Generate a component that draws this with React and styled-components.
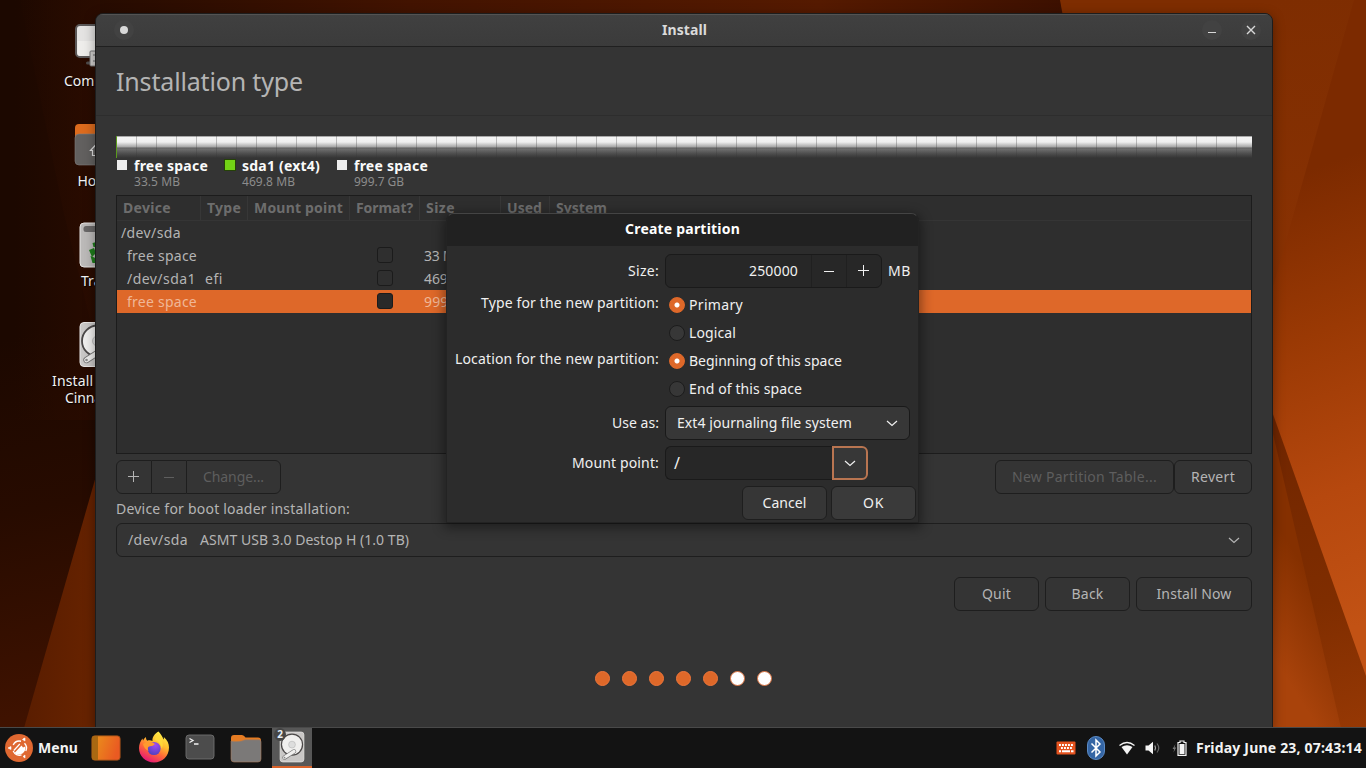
import React, { useLayoutEffect, useRef, useState } from "react";
import styled, { createGlobalStyle, css } from "styled-components";

const Global = createGlobalStyle`
  * { box-sizing: border-box; }
  html, body { margin: 0; padding: 0; overflow: hidden; }
  body { font-family: "Noto Sans", "Open Sans", sans-serif; font-size: 14px; line-height: 20px; color: #f2f2f2; background: #1c0800; }
`;

/* ---------- text ---------- */

const TextSpan = styled.span`
  display: inline-block;
  flex: none;
  white-space: pre;
  font-size: ${(p) => p.$size || 14}px;
  font-weight: ${(p) => (p.$bold ? 700 : 400)};
  line-height: ${(p) => p.$line || 20}px;
  color: ${(p) => p.$color || "inherit"};
`;

/* A label tracked so that it takes a given advance width. */
function Text({ w, size, bold, color, line, children }) {
  const ref = useRef(null);
  const [spacing, setSpacing] = useState(0);
  useLayoutEffect(() => {
    const natural = ref.current.getBoundingClientRect().width;
    setSpacing((w - 1 - natural) / children.length);
  }, []);
  return (
    <TextSpan ref={ref} $size={size} $bold={bold} $color={color} $line={line} style={{ letterSpacing: spacing }}>
      {children}
    </TextSpan>
  );
}

/* ---------- desktop ---------- */

const Desktop = styled.div`
  position: relative;
  width: 1366px;
  height: 768px;
  overflow: hidden;
`;

const WallpaperSvg = styled.svg`
  position: absolute;
  inset: 0;
`;

function Wallpaper() {
  return (
    <WallpaperSvg width="1366" height="768" viewBox="0 0 1366 768">
      <defs>
        <linearGradient id="wBase" x1="0" y1="0" x2="1" y2="0">
          <stop offset="0" stopColor="#1a0800" />
          <stop offset="0.07" stopColor="#260b00" />
          <stop offset="0.3" stopColor="#421300" />
          <stop offset="0.6" stopColor="#551a00" />
          <stop offset="0.78" stopColor="#3c1000" />
        </linearGradient>
        <linearGradient id="wLeft" gradientUnits="userSpaceOnUse" x1="0" y1="340" x2="90" y2="760">
          <stop offset="0" stopColor="#1c0800" />
          <stop offset="0.4" stopColor="#270b00" />
          <stop offset="1" stopColor="#461400" />
        </linearGradient>
        <linearGradient id="wShade" gradientUnits="userSpaceOnUse" x1="15" y1="0" x2="100" y2="0">
          <stop offset="0" stopColor="#2c0c00" stopOpacity="0" />
          <stop offset="1" stopColor="#2c0c00" stopOpacity="1" />
        </linearGradient>
        <linearGradient id="wWedge" x1="0" y1="0" x2="1" y2="0.3">
          <stop offset="0" stopColor="#551b00" />
          <stop offset="1" stopColor="#672300" />
        </linearGradient>
        <linearGradient id="wTop" gradientUnits="userSpaceOnUse" x1="1273" y1="0" x2="1300" y2="300">
          <stop offset="0" stopColor="#7e2d01" />
          <stop offset="1" stopColor="#8a3203" />
        </linearGradient>
        <linearGradient id="wMid" gradientUnits="userSpaceOnUse" x1="1280" y1="180" x2="1430" y2="600">
          <stop offset="0" stopColor="#7c2a00" />
          <stop offset="0.35" stopColor="#9a3904" />
          <stop offset="0.7" stopColor="#b6480e" />
          <stop offset="1" stopColor="#c25214" />
        </linearGradient>
        <linearGradient id="wBand" gradientUnits="userSpaceOnUse" x1="1273" y1="410" x2="1366" y2="727">
          <stop offset="0" stopColor="#6f2500" />
          <stop offset="0.6" stopColor="#7f2d00" />
          <stop offset="1" stopColor="#963804" />
        </linearGradient>
        <linearGradient id="wLow" gradientUnits="userSpaceOnUse" x1="1325" y1="600" x2="1262" y2="640">
          <stop offset="0" stopColor="#853000" />
          <stop offset="1" stopColor="#a9430b" />
        </linearGradient>
      </defs>
      <rect width="1366" height="768" fill="url(#wBase)" />
      <rect width="100" height="768" fill="url(#wLeft)" />
      <rect width="100" height="420" fill="url(#wShade)" opacity="0.7" />
      <path d="M20 0 H100 V360 L64 214Z" fill="url(#wShade)" opacity="0.6" />
      <path d="M100 462 L24 728 H100Z" fill="url(#wWedge)" />
      <path d="M1060 0 H1366 V768 H1200Z" fill="url(#wTop)" />
      <path d="M1354 0 H1366 V768 H1273 V287Z" fill="url(#wMid)" />
      <path d="M1268 400 L1366 676 V728 H1268Z" fill="url(#wBand)" />
      <path d="M1268 412 L1341 728 H1268Z" fill="url(#wLow)" />
    </WallpaperSvg>
  );
}

const Shortcuts = styled.div`
  position: absolute;
  left: 47px;
  top: 17px;
  width: 100px;
  display: flex;
  flex-direction: column;
`;

const Shortcut = styled.div`
  height: 100px;
  display: flex;
  flex-direction: column;
  align-items: center;
  text-shadow: 1px 1px 1px #000;
  svg { flex: none; margin-bottom: 1px; }
`;

const LabelLine = styled.div`
  align-self: flex-start;
  height: ${(p) => p.$h || 20}px;
  padding-left: ${(p) => p.$indent}px;
`;

function DriveShape() {
  return (
    <>
      <rect x="6.5" y="2.5" width="35" height="44" rx="4" fill="#c9c7c6" stroke="#e9e7e6" />
      <circle cx="24" cy="21" r="15.5" fill="#f0efee" stroke="#4b4848" strokeWidth="1.8" />
      <circle cx="24" cy="21" r="5" fill="#ddd" stroke="#bbb" />
      <path d="M13 40 L27 31" stroke="#777" strokeWidth="6.4" strokeLinecap="round" />
      <path d="M13 40 L27 31" stroke="#efeeed" strokeWidth="4.6" strokeLinecap="round" />
      <circle cx="13" cy="40" r="1.3" fill="#888" />
    </>
  );
}

const desktopIcons = {
  computer: (
    <>
      <rect x="3" y="8" width="42" height="32" rx="4" fill="#e4e3e2" stroke="#5b5858" strokeWidth="2" />
      <path d="M4.500 24 H44 V36 Q44 39 41 39 H7.500 Q4.500 39 4.500 36Z" fill="#f0efee" opacity="0.8" />
      <rect x="13" y="44.500" width="22" height="3" rx="1.500" fill="#4f4c4c" />
      <rect x="17" y="34" width="18" height="15" rx="1" fill="#cfcdcc" stroke="#777" />
      <path d="M20 38 H34 M20 44 H34" stroke="#888" strokeWidth="1.500" />
    </>
  ),
  home: (
    <>
      <path d="M2 11 Q2 7 6 7 H42 Q46 7 46 11 V26 H2Z" fill="#dd6b1d" />
      <path d="M2 21 Q2 17 6 17 H42 Q46 17 46 21 V44 Q46 48 42 48 H6 Q2 48 2 44Z" fill="#62605f" stroke="#817e7d" strokeWidth="0.6" />
      <path d="M24 26.500 L17.500 33.500 H19.500 V38.500 H28.500 V33.500 H30.500Z" fill="none" stroke="#ddd" strokeWidth="1.200" />
    </>
  ),
  trash: (
    <>
      <rect x="7" y="6" width="34" height="44" rx="4" fill="#bcbab9" stroke="#e4e2e1" />
      <rect x="10.500" y="9" width="27" height="6" rx="2.500" fill="#6a6868" />
      <path d="M19.500 26 l4 -1 l3 5 h-6z M16 33 l5 -2 l2 5 l-4 4 z M17.500 39 l5 2 v5 h-3z" fill="#1f7d1c" />
    </>
  ),
};

/* ---------- window ---------- */

const Window = styled.section`
  position: absolute;
  left: 95px;
  top: 13px;
  width: 1178px;
  height: 715px;
  border: 1px solid #1d1d1d;
  border-radius: 8px 8px 0 0;
  background: #343434;
  color: #b4b4b4;
  box-shadow: 0 3px 12px rgba(0, 0, 0, 0.38);
  overflow: hidden;
`;

const TitleBar = styled.header`
  height: 33px;
  display: flex;
  align-items: center;
  padding: 0 11px 1px 18px;
  background: linear-gradient(#404040, #3b3b3b);
  border-top: 1px solid #535353;
  border-bottom: 1px solid #202020;
  color: #dadada;
`;

const TitleSide = styled.div`
  width: 200px;
  display: flex;
  justify-content: ${(p) => p.$end ? "flex-end" : "flex-start"};
  gap: 19px;
`;

const TitleText = styled.div`
  flex: 1;
  display: flex;
  justify-content: center;
  padding: 0 6px 1px 0;
`;

const RoundControl = styled.div`
  width: 20px;
  height: 20px;
  border-radius: 50%;
  background: #424242;
  svg { display: block; }
`;

const Heading = styled.div`
  height: 69px;
  padding: 17px 0 0 20px;
  border-bottom: 1px solid #2d2d2d;
`;

const Body = styled.div`
  padding: 20px 20px 0;
  display: flex;
  flex-direction: column;
`;

const PartitionBar = styled.div`
  height: 22px;
  border-left: 1px solid #5a9a1c;
  background:
    linear-gradient(transparent 0 12px, rgba(52, 52, 52, 0.1) 13px, #343434 22px),
    repeating-linear-gradient(90deg, transparent 0 19px, rgba(70, 70, 70, 0.32) 19px 20px),
    linear-gradient(#a8a8a8 0 1px, #f4f4f4 1px, #f0f0f0 6px, #a5a5a5 11px, #5d5d5d 12px, #777 13px, #686868 22px);
`;

const Legend = styled.div`
  height: 37px;
  display: flex;
`;

const LegendItem = styled.div`
  display: flex;
  gap: 6px;
  width: ${(p) => p.$w}px;
`;

const Swatch = styled.i`
  width: 12px;
  height: 12px;
  margin-top: 1px;
  border: 1px solid ${(p) => p.$edge};
  background: ${(p) => p.$fill};
`;

const LegendText = styled.div`
  display: flex;
  flex-direction: column;
  align-items: flex-start;
`;

const Table = styled.div`
  height: 259px;
  border: 1px solid #1c1c1c;
  background: #2e2e2e;
`;

const cols = "84px 47px 102px 70px 81px 49px 1fr";

const HeadRow = styled.div`
  display: grid;
  grid-template-columns: ${cols};
  height: 25px;
  border-bottom: 1px solid #353535;
`;

const HeadCell = styled.div`
  padding: 2px 0 0 6px;
  overflow: hidden;
  border-right: 1px solid #373737;
  &:last-child { border-right: none; }
`;

const Row = styled.div`
  display: grid;
  grid-template-columns: ${cols};
  height: 23px;
  ${(p) => p.$on && css`
    background: #de6829;
    color: #f0b796;
  `}
`;

const Cell = styled.div`
  display: flex;
  padding-top: 2px;
  padding-left: ${(p) => p.$pad || 4}px;
`;

const Check = styled.i`
  width: 16px;
  height: 16px;
  margin: 1px 0 0 23px;
  border: 1px solid #1b1b1b;
  border-radius: 3px;
  background: ${(p) => (p.$on ? "#292929" : "#2f2f2f")};
`;

const Actions = styled.div`
  display: flex;
  justify-content: space-between;
  margin-top: 6px;
`;

const Group = styled.div`
  display: flex;
`;

const Button = styled.button`
  display: flex;
  align-items: center;
  justify-content: center;
  height: 34px;
  width: ${(p) => p.$w}px;
  padding: 0 0 ${(p) => (p.$glyph ? 0 : 1)}px;
  margin: 0;
  font: inherit;
  border: 1px solid #1e1e1e;
  border-radius: 6px;
  background: ${(p) => p.$bg || "#343434"};
  color: ${(p) => (p.$off ? "#5e5e5e" : "inherit")};
  ${(p) => p.$join === "left" && css`border-radius: 6px 0 0 6px;`}
  ${(p) => p.$join === "mid" && css`border-radius: 0; border-width: 1px 0;`}
  ${(p) => p.$join === "right" && css`border-radius: 0 6px 6px 0;`}
`;

const FieldLabel = styled.div`
  height: 29px;
  padding-top: 5px;
`;

const Select = styled.div`
  height: 34px;
  display: flex;
  align-items: center;
  gap: 12px;
  padding: 0 9px 1px 11px;
  border: 1px solid #1e1e1e;
  border-radius: 6px;
  background: #343434;
  svg { margin-left: auto; }
`;

const Footer = styled.div`
  display: flex;
  justify-content: flex-end;
  gap: 6px;
  margin-top: 20px;
`;

const Dots = styled.div`
  display: flex;
  justify-content: center;
  gap: 12px;
  margin-top: 60px;
  padding-right: 2px;
`;

const Dot = styled.i`
  width: 15px;
  height: 15px;
  border-radius: 50%;
  border: 1px solid ${(p) => (p.$on ? "#f0763a" : "#d9713f")};
  background: ${(p) => (p.$on ? "#de6829" : "#fff")};
`;

/* ---------- dialog ---------- */

const Dialog = styled.section`
  position: absolute;
  left: 446px;
  top: 213px;
  width: 473px;
  height: 310px;
  border: 1px solid #232323;
  border-top-color: #444;
  border-radius: 8px 8px 0 0;
  background: #2c2c2c;
  color: #f0f0f0;
  box-shadow: 0 3px 12px 2px rgba(0, 0, 0, 0.42);
`;

const DialogTitle = styled.header`
  height: 32px;
  display: flex;
  justify-content: center;
  align-items: center;
  padding-bottom: 2px;
  background: #212121;
  border-radius: 7px 7px 0 0;
  color: #fff;
`;

const Form = styled.div`
  display: grid;
  grid-template-columns: 212px auto;
  column-gap: 6px;
  padding-top: 8px;
`;

const FormLabel = styled.div`
  display: flex;
  justify-content: flex-end;
  padding-top: ${(p) => p.$top}px;
`;

const FormValue = styled.div`
  display: flex;
  align-items: center;
  gap: 6px;
  height: ${(p) => p.$h}px;
  padding-bottom: ${(p) => p.$pb || 0}px;
  padding-left: ${(p) => p.$pl || 0}px;
`;

const Spin = styled.div`
  width: 217px;
  height: 34px;
  display: flex;
  align-items: stretch;
  border: 1px solid #1a1a1a;
  border-radius: 6px;
  background: #272727;
`;

const SpinValue = styled.div`
  flex: 1;
  display: flex;
  justify-content: flex-end;
  align-items: center;
  padding: 0 13px 0 0;
`;

const SpinButton = styled.div`
  width: 35px;
  display: flex;
  align-items: center;
  justify-content: center;
  border-left: 1px solid #202020;
`;

const Radio = styled.i`
  width: 16px;
  height: 16px;
  border-radius: 50%;
  margin-right: -2px;
  border: 1px solid ${(p) => (p.$on ? "#de6829" : "#1c1c1c")};
  background: ${(p) => (p.$on ? "radial-gradient(circle, #fff 0 2px, #de6829 3px)" : "#373737")};
`;

const DialogSelect = styled(Select)`
  width: 245px;
  background: #373737;
  border-color: #191919;
`;

const Combo = styled.div`
  display: flex;
  height: 34px;
`;

const Entry = styled.div`
  width: 167px;
  padding: 6px 0 0 8px;
  border: 1px solid #1a1a1a;
  border-right: 0;
  border-radius: 6px 0 0 6px;
  background: #272727;
`;

const ComboArrow = styled.div`
  width: 36px;
  display: flex;
  align-items: center;
  justify-content: center;
  border: 2px solid #b97551;
  border-radius: 0 6px 6px 0;
  background: #373737;
`;

const DialogActions = styled.div`
  display: flex;
  justify-content: flex-end;
  gap: 4px;
  padding-right: 2px;
`;

/* ---------- panel ---------- */

const Panel = styled.footer`
  position: absolute;
  left: 0;
  top: 727px;
  width: 1366px;
  height: 41px;
  display: flex;
  align-items: stretch;
  border-top: 1px solid #494949;
  background: #131313;
  color: #f3f3f3;
`;

const MenuButton = styled.div`
  width: 86px;
  display: flex;
  align-items: center;
  gap: 5px;
  padding-left: 5px;
`;

const Launcher = styled.div`
  position: relative;
  width: 40px;
  margin-right: ${(p) => p.$gap || 6}px;
  display: flex;
  align-items: center;
  justify-content: center;
  padding-bottom: ${(p) => p.$lift || 0}px;
  ${(p) => p.$active && css`
    background: #575757;
    border-bottom: 2px solid #d8622a;
  `}
`;

const Badge = styled.div`
  position: absolute;
  left: 2px;
  top: 0;
  width: 12px;
  height: 13px;
  border-radius: 50%;
  background: #454545;
  text-align: center;
  font-size: 10px;
  font-weight: 700;
  line-height: 13px;
  color: #e6eef8;
`;

const Tray = styled.div`
  margin-left: auto;
  display: flex;
  align-items: center;
  padding-right: 4px;
  svg { flex: none; }
`;

const TrayItem = styled.div`
  display: flex;
  margin-right: ${(p) => p.$gap}px;
`;

/* ---------- glyphs ---------- */

const Glyph = ({ d, width = 1 }) => (
  <svg width="16" height="16" viewBox="0 0 16 16" fill="none" stroke="currentColor" strokeWidth={width}>
    <path d={d} />
  </svg>
);

const PLUS = "M7.500 2 V13 M2 7.500 H13";
const MINUS = "M3 8.500 H13";
const Chevron = () => <Glyph d="M3 6 L8 10.500 L13 6" width={1.2} />;

function MenuLogo() {
  return (
    <svg width="28" height="28" viewBox="0 0 28 28">
      <circle cx="14" cy="14" r="14" fill="#df6831" />
      <path d="M8.200 11 A7 7 0 0 1 16 7.200 M19.500 9.300 A7 7 0 0 1 20.800 17 M16.500 20.900 A7 7 0 0 1 8.200 17" fill="none" stroke="#fff" strokeWidth="1.400" />
      <path d="M9.500 19 L16.500 11.500 L18 13.500 L20.300 12.500 Q21 16.500 17.800 19.200 Q13.500 22 9.500 19Z" fill="#fff" />
      <path d="M8.800 16.500 L14.800 10" stroke="#fff" strokeWidth="1.200" />
      <path d="M3 14 l3 -1.500 v3z M18.500 4.500 l1.500 -0.500 v3 l-2.500 -1.500z M18 22.500 l2 -1.500 v3z" fill="#fff" stroke="#fff" strokeWidth="0.600" />
    </svg>
  );
}

function ShowDesktop() {
  return (
    <svg width="30" height="26" viewBox="0 0 30 26">
      <defs>
        <linearGradient id="sd" x1="0" x2="1" y2="0.3">
          <stop offset="0.2" stopColor="#ea8a1c" />
          <stop offset="1" stopColor="#ea5a22" />
        </linearGradient>
      </defs>
      <rect x="0.800" y="0.800" width="28.400" height="24.400" rx="3" fill="url(#sd)" stroke="#8a4a16" strokeWidth="0.800" />
      <path d="M3.800 1 H7 V25 H3.800 Q1 25 1 22 V4 Q1 1 3.800 1Z" fill="#a96812" />
    </svg>
  );
}

function Firefox() {
  return (
    <svg width="32" height="32" viewBox="0 0 32 32">
      <defs>
        <linearGradient id="ffA" x1="0.800" y1="0.050" x2="0.300" y2="1">
          <stop offset="0" stopColor="#fff24a" />
          <stop offset="0.350" stopColor="#ffbd2e" />
          <stop offset="0.620" stopColor="#ff6a36" />
          <stop offset="1" stopColor="#e3127b" />
        </linearGradient>
        <radialGradient id="ffB" cx="0.600" cy="0.250" r="0.850">
          <stop offset="0" stopColor="#a04bf2" />
          <stop offset="1" stopColor="#4540b8" />
        </radialGradient>
      </defs>
      <path d="M20.500 0.500 C22.500 3 24.500 5 25.500 8.500 C26 7.800 26 6.800 25.800 6 C29.500 9 31 13 31 16.500 C31 25 24.500 31.500 16 31.500 C7.500 31.500 1 25 1 17 C1 13 2.500 10 4.500 7.500 L5 9.800 C5.800 8 6.800 6.800 8 6 C7.800 7.500 8.300 8.800 9.300 9.700 C11 9 13 9.200 14.500 10 C14 6 17 2.500 20.500 0.500Z" fill="url(#ffA)" />
      <circle cx="16" cy="17.500" r="6.600" fill="url(#ffB)" />
      <path d="M5 13 Q9 9.500 14.500 11.500 L17 13 Q15 15.300 12 15.200 Q8.500 15.800 10.500 20 Q6 18 5 13Z" fill="#ff9a2e" />
      <path d="M17 9 Q23 11 23.500 18 Q26 14 23.500 8 L20.500 3 Q17 5 17 9Z" fill="#ffdc3b" opacity="0.800" />
    </svg>
  );
}

function Terminal() {
  return (
    <svg width="30" height="26" viewBox="0 0 30 26">
      <rect x="1" y="1" width="28" height="24" rx="3" fill="#4c4c4c" stroke="#6f6f6f" strokeWidth="0.900" />
      <path d="M4.500 4.500 L8 6.500 L4.500 8.500 M9 10 H13.500" fill="none" stroke="#f2f2f2" strokeWidth="1.300" />
    </svg>
  );
}

function Folder() {
  return (
    <svg width="32" height="29" viewBox="0 0 32 29">
      <path d="M1 4 Q1 1 4 1 H12 Q14 1 15.500 3.500 H28 Q31 3.500 31 6.500 V14 H1Z" fill="#e57c23" />
      <path d="M1 7 Q10 8.500 15 5.800 H29 Q31 5.800 31 8 V25 Q31 28 28 28 H4 Q1 28 1 25Z" fill="#7b7978" stroke="#a87a5a" strokeWidth="0.600" />
    </svg>
  );
}

function KeyboardIcon() {
  return (
    <svg width="20" height="14" viewBox="0 0 20 14">
      <rect x="0.500" y="0.500" width="19" height="13" rx="1" fill="#e4531f" />
      <path d="M3 4 H17.500 M5 7 H16" stroke="#fff" strokeWidth="1.900" strokeDasharray="1.900 1.100" />
      <path d="M3 10.300 H5 M6 10.300 H14 M15 10.300 H17.500" stroke="#fff" strokeWidth="1.900" />
    </svg>
  );
}

function BluetoothIcon() {
  return (
    <svg width="18" height="24" viewBox="0 0 18 24">
      <rect x="0.500" y="0.500" width="17" height="23" rx="8.500" fill="#3465a4" stroke="#5b8ac4" />
      <path d="M4.500 7.500 L13 16 L9 20 V4 L13 8 L4.500 16.500" fill="none" stroke="#fff" strokeWidth="1.500" />
    </svg>
  );
}

function WifiIcon() {
  return (
    <svg width="16" height="14" viewBox="0 0 16 14">
      <path d="M8 13.500 L2.500 6 Q8 2.500 13.500 6Z" fill="#f4f4f4" />
      <path d="M0.500 4.500 Q8 -1.500 15.500 4.500" fill="none" stroke="#f4f4f4" strokeWidth="1.300" />
    </svg>
  );
}

function VolumeIcon() {
  return (
    <svg width="16" height="14" viewBox="0 0 16 14">
      <path d="M0.500 4.500 H3.500 L8 0.800 V13.200 L3.500 9.500 H0.500Z" fill="#f4f4f4" />
      <path d="M9.800 4.500 Q11.300 7 9.800 9.500" fill="none" stroke="#aaa" strokeWidth="1.200" />
      <path d="M12 2.500 Q15.500 7 12 11.500" fill="none" stroke="#666" strokeWidth="1.200" />
    </svg>
  );
}

function BatteryIcon() {
  return (
    <svg width="16" height="16" viewBox="0 0 16 16">
      <path d="M4.500 4 L1.500 9 H3.200 L2.500 12.500 L5.200 7.500 H3.500Z" fill="#777" />
      <path d="M7 2.500 H9 V1 H13 V2.500 H15 V15.300 H7Z" fill="none" stroke="#f4f4f4" strokeWidth="1.200" />
      <rect x="8.500" y="4" width="5" height="10" fill="#f4f4f4" />
    </svg>
  );
}

/* ---------- data ---------- */

const legend = [
  { name: "free space", nw: 75, size: "33.5 MB", sw: 47, fill: "#eee", edge: "#343434", w: 108 },
  { name: "sda1 (ext4)", nw: 79, size: "469.8 MB", sw: 54, fill: "#73d216", edge: "#254207", w: 112 },
  { name: "free space", nw: 75, size: "999.7 GB", sw: 51, fill: "#eee", edge: "#343434", w: 112 },
];

const headers = [
  ["Device", 49], ["Type", 35], ["Mount point", 90], ["Format?", 58], ["Size", 30], ["Used", 36], ["System", 52],
];

const rows = [
  { device: "free space", dw: 71, size: "33 MB", sw: 41 },
  { device: "/dev/sda1", dw: 70, type: "efi", size: "469 MB", sw: 50 },
  { device: "free space", dw: 71, size: "999 GB", sw: 49, on: true },
];

/* ---------- views ---------- */

function InstallWindow() {
  return (
    <Window>
      <TitleBar>
        <TitleSide>
          <RoundControl>
            <svg width="20" height="20"><circle cx="10" cy="10" r="4" fill="#d8d8d8" /></svg>
          </RoundControl>
        </TitleSide>
        <TitleText><Text w={46} bold>Install</Text></TitleText>
        <TitleSide $end>
          <RoundControl>
            <svg width="20" height="20"><path d="M6 12.500 H14" stroke="#d8d8d8" /></svg>
          </RoundControl>
          <RoundControl>
            <svg width="20" height="20"><path d="M6 6 L14 14 M14 6 L6 14" stroke="#d8d8d8" strokeWidth="1.400" /></svg>
          </RoundControl>
        </TitleSide>
      </TitleBar>
      <Heading><Text w={188} size={25} line={34}>Installation type</Text></Heading>
      <Body>
        <PartitionBar />
        <Legend>
          {legend.map((l, i) => (
            <LegendItem key={i} $w={l.w}>
              <Swatch $fill={l.fill} $edge={l.edge} />
              <LegendText>
                <Text w={l.nw} bold color="#fafafa" line={16}>{l.name}</Text>
                <Text w={l.sw} size={12} color="#8c8c8c" line={16}>{l.size}</Text>
              </LegendText>
            </LegendItem>
          ))}
        </Legend>
        <Table>
          <HeadRow>
            {headers.map(([name, w]) => (
              <HeadCell key={name}><Text w={w} bold color="#6d6d6d">{name}</Text></HeadCell>
            ))}
          </HeadRow>
          <Row><Cell><Text w={61}>/dev/sda</Text></Cell></Row>
          {rows.map((r, i) => (
            <Row key={i} $on={r.on}>
              <Cell $pad={10}><Text w={r.dw}>{r.device}</Text></Cell>
              <Cell>{r.type && <Text w={19}>{r.type}</Text>}</Cell>
              <Cell />
              <Cell><Check $on={r.on} /></Cell>
              <Cell><Text w={r.sw}>{r.size}</Text></Cell>
            </Row>
          ))}
        </Table>
        <Actions>
          <Group>
            <Button $w={36} $join="left" $glyph><Glyph d={PLUS} /></Button>
            <Button $w={34} $join="mid" $off $glyph><Glyph d={MINUS} /></Button>
            <Button $w={95} $join="right" $off><Text w={62}>Change...</Text></Button>
          </Group>
          <Group>
            <Button $w={179} $off><Text w={146}>New Partition Table...</Text></Button>
            <Button $w={78}><Text w={45}>Revert</Text></Button>
          </Group>
        </Actions>
        <FieldLabel><Text w={235}>Device for boot loader installation:</Text></FieldLabel>
        <Select>
          <Text w={61}>/dev/sda</Text>
          <Text w={210}>ASMT USB 3.0 Destop H (1.0 TB)</Text>
          <Chevron />
        </Select>
        <Footer>
          <Button $w={85}><Text w={30}>Quit</Text></Button>
          <Button $w={85}><Text w={33}>Back</Text></Button>
          <Button $w={116}><Text w={76}>Install Now</Text></Button>
        </Footer>
        <Dots>
          {[1, 1, 1, 1, 1, 0, 0].map((on, i) => <Dot key={i} $on={on} />)}
        </Dots>
      </Body>
    </Window>
  );
}

function PartitionDialog() {
  return (
    <Dialog>
      <DialogTitle><Text w={116} bold>Create partition</Text></DialogTitle>
      <Form>
        <FormLabel $top={7}><Text w={32}>Size:</Text></FormLabel>
        <FormValue $h={37} $pb={3}>
          <Spin>
            <SpinValue><Text w={50}>250000</Text></SpinValue>
            <SpinButton><Glyph d={MINUS} /></SpinButton>
            <SpinButton><Glyph d={PLUS} /></SpinButton>
          </Spin>
          <Text w={24}>MB</Text>
        </FormValue>
        <FormLabel $top={2}><Text w={179}>Type for the new partition:</Text></FormLabel>
        <FormValue $h={28} $pl={4}><Radio $on /><Text w={55}>Primary</Text></FormValue>
        <FormLabel />
        <FormValue $h={28} $pl={4}><Radio /><Text w={48}>Logical</Text></FormValue>
        <FormLabel $top={2}><Text w={205}>Location for the new partition:</Text></FormLabel>
        <FormValue $h={28} $pl={4}><Radio $on /><Text w={154}>Beginning of this space</Text></FormValue>
        <FormLabel />
        <FormValue $h={31} $pl={4} $pb={3}><Radio /><Text w={114}>End of this space</Text></FormValue>
        <FormLabel $top={7}><Text w={48}>Use as:</Text></FormLabel>
        <FormValue $h={40} $pb={6}>
          <DialogSelect>
            <Text w={176}>Ext4 journaling file system</Text>
            <Chevron />
          </DialogSelect>
        </FormValue>
        <FormLabel $top={7}><Text w={88}>Mount point:</Text></FormLabel>
        <FormValue $h={40} $pb={6}>
          <Combo>
            <Entry><Text w={8} size={16}>/</Text></Entry>
            <ComboArrow><Chevron /></ComboArrow>
          </Combo>
        </FormValue>
      </Form>
      <DialogActions>
        <Button $w={85} $bg="#363636"><Text w={45}>Cancel</Text></Button>
        <Button $w={85} $bg="#3a3a3a"><Text w={22}>OK</Text></Button>
      </DialogActions>
    </Dialog>
  );
}

export default function App() {
  return (
    <Desktop>
      <Global />
      <Wallpaper />
      <Shortcuts>
        <Shortcut>
          <svg width="48" height="53">{desktopIcons.computer}</svg>
          <Text w={67}>Computer</Text>
        </Shortcut>
        <Shortcut>
          <svg width="48" height="53">{desktopIcons.home}</svg>
          <Text w={40}>Home</Text>
        </Shortcut>
        <Shortcut>
          <svg width="48" height="53">{desktopIcons.trash}</svg>
          <LabelLine $indent={34}><Text w={37}>Trash</Text></LabelLine>
        </Shortcut>
        <Shortcut>
          <svg width="48" height="53" viewBox="-0.500 -3 48 53"><DriveShape /></svg>
          <LabelLine $indent={5} $h={17}><Text w={97}>Install Ubuntu</Text></LabelLine>
          <LabelLine $indent={18}><Text w={68}>Cinnamon</Text></LabelLine>
        </Shortcut>
      </Shortcuts>
      <InstallWindow />
      <PartitionDialog />
      <Panel>
        <MenuButton><MenuLogo /><Text w={41} bold>Menu</Text></MenuButton>
        <Launcher $gap={8}><ShowDesktop /></Launcher>
        <Launcher $lift={2}><Firefox /></Launcher>
        <Launcher $lift={2}><Terminal /></Launcher>
        <Launcher><Folder /></Launcher>
        <Launcher $active>
          <svg width="26" height="32" viewBox="5 1 38 47"><DriveShape /></svg>
          <Badge>2</Badge>
        </Launcher>
        <Tray>
          <TrayItem $gap={11}><KeyboardIcon /></TrayItem>
          <TrayItem $gap={14}><BluetoothIcon /></TrayItem>
          <TrayItem $gap={10}><WifiIcon /></TrayItem>
          <TrayItem $gap={10}><VolumeIcon /></TrayItem>
          <TrayItem $gap={9}><BatteryIcon /></TrayItem>
          <Text w={167} bold>Friday June 23, 07:43:14</Text>
        </Tray>
      </Panel>
    </Desktop>
  );
}
